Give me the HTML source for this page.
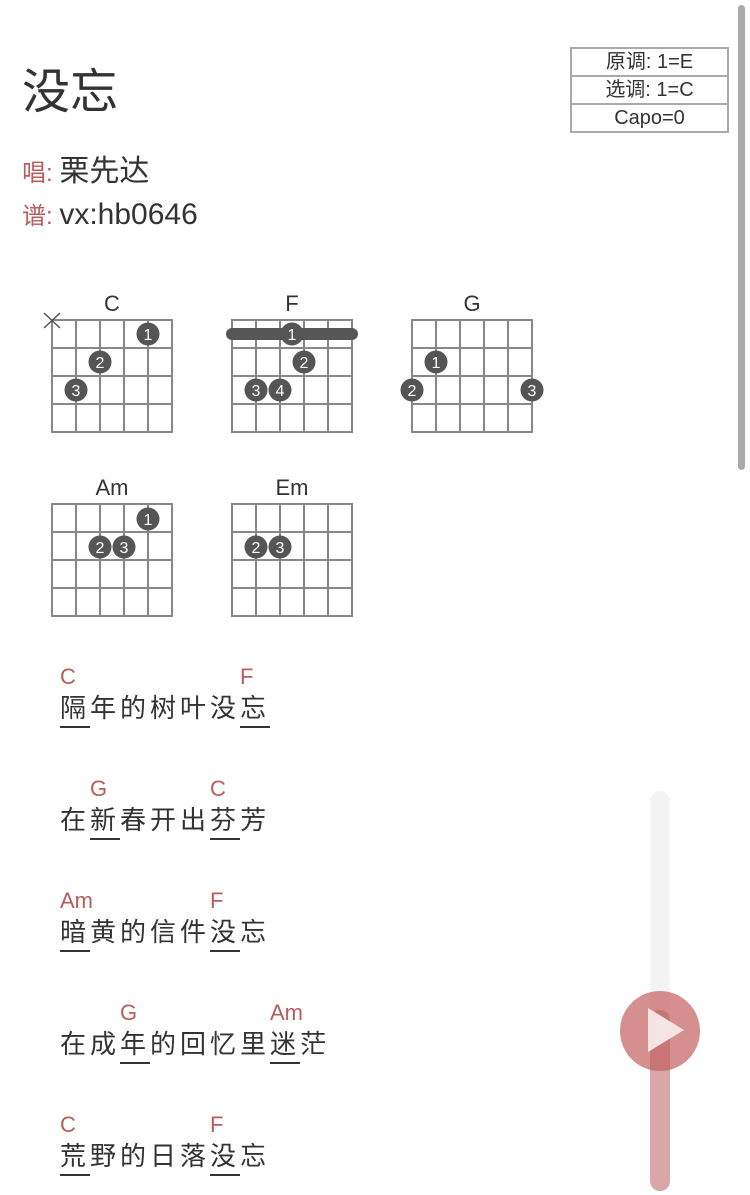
<!DOCTYPE html>
<html><head><meta charset="utf-8"><style>
body{margin:0;width:750px;height:1195px;background:#fff;position:relative;overflow:hidden;font-family:"Liberation Sans","Noto Sans CJK SC",sans-serif;color:#333}
.a{position:absolute;white-space:nowrap}
.title{left:22px;top:52px;font-size:48px;color:#333}
.lab{color:#b85c5c;font-size:24px}
.nm{font-size:30px;color:#333}
table{position:absolute;left:570px;top:47px;border-collapse:collapse}
td{border:2px solid #aaa;width:155px;height:26px;padding:0;text-align:center;font-size:20px;line-height:26px;color:#333}
.ly{font-size:26px;letter-spacing:4px;color:#333}
.ly u{text-decoration:none;border-bottom:2px solid #333;padding-bottom:3px}
.ch{color:#b85c5c;font-size:22px}
</style></head><body>
<div class="a title">没忘</div>
<div class="a" style="left:22px;top:146px"><span class="lab">唱: </span><span class="nm">栗先达</span></div>
<div class="a" style="left:22px;top:196px"><span class="lab">谱: </span><span class="nm">vx:hb0646</span></div>
<table><tr><td>原调: 1=E</td></tr><tr><td>选调: 1=C</td></tr><tr><td>Capo=0</td></tr></table>
<div class="a" style="left:738px;top:5px;width:7px;height:465px;background:#aaa;border-radius:4px"></div>

<svg class="a" style="left:0;top:280px" width="560" height="350" viewBox="0 280 560 350" font-family="Liberation Sans, sans-serif">
<defs>
<g id="grid" stroke="#888" stroke-width="2" fill="none">
<rect x="0" y="0" width="120" height="112"/>
<path d="M24 0V112M48 0V112M72 0V112M96 0V112M0 28H120M0 56H120M0 84H120"/>
</g>
</defs>
<g font-size="22" fill="#333" text-anchor="middle">
<text x="112" y="311">C</text><text x="292" y="311">F</text><text x="472" y="311">G</text>
<text x="112" y="495">Am</text><text x="292" y="495">Em</text></g>
<use href="#grid" x="52" y="320"/><use href="#grid" x="232" y="320"/><use href="#grid" x="412" y="320"/>
<use href="#grid" x="52" y="504"/><use href="#grid" x="232" y="504"/>
<path d="M44 313L60 328M60 313L44 328" stroke="#555" stroke-width="1.5"/>
<line x1="232" y1="334" x2="352" y2="334" stroke="#555" stroke-width="12" stroke-linecap="round"/>
<g fill="#555">
<circle cx="148" cy="334" r="11.5"/><circle cx="100" cy="362" r="11.5"/><circle cx="76" cy="390" r="11.5"/>
<circle cx="292" cy="334" r="11.5"/><circle cx="304" cy="362" r="11.5"/><circle cx="256" cy="390" r="11.5"/><circle cx="280" cy="390" r="11.5"/>
<circle cx="436" cy="362" r="11.5"/><circle cx="412" cy="390" r="11.5"/><circle cx="532" cy="390" r="11.5"/>
<circle cx="148" cy="519" r="11.5"/><circle cx="100" cy="547" r="11.5"/><circle cx="124" cy="547" r="11.5"/>
<circle cx="256" cy="547" r="11.5"/><circle cx="280" cy="547" r="11.5"/>
</g>
<g fill="#fff" font-size="16" text-anchor="middle">
<text x="148" y="340">1</text><text x="100" y="368">2</text><text x="76" y="396">3</text>
<text x="292" y="340">1</text><text x="304" y="368">2</text><text x="256" y="396">3</text><text x="280" y="396">4</text>
<text x="436" y="368">1</text><text x="412" y="396">2</text><text x="532" y="396">3</text>
<text x="148" y="525">1</text><text x="100" y="553">2</text><text x="124" y="553">3</text>
<text x="256" y="553">2</text><text x="280" y="553">3</text>
</g>
</svg>

<div class="a ch" style="left:60px;top:664px">C</div><div class="a ch" style="left:240px;top:664px">F</div>
<div class="a ly" style="left:60px;top:688px"><u>隔</u>年的树叶没<u>忘</u></div>
<div class="a ch" style="left:90px;top:776px">G</div><div class="a ch" style="left:210px;top:776px">C</div>
<div class="a ly" style="left:60px;top:800px">在<u>新</u>春开出<u>芬</u>芳</div>
<div class="a ch" style="left:60px;top:888px">Am</div><div class="a ch" style="left:210px;top:888px">F</div>
<div class="a ly" style="left:60px;top:912px"><u>暗</u>黄的信件<u>没</u>忘</div>
<div class="a ch" style="left:120px;top:1000px">G</div><div class="a ch" style="left:270px;top:1000px">Am</div>
<div class="a ly" style="left:60px;top:1024px">在成<u>年</u>的回忆里<u>迷</u>茫</div>
<div class="a ch" style="left:60px;top:1112px">C</div><div class="a ch" style="left:210px;top:1112px">F</div>
<div class="a ly" style="left:60px;top:1136px"><u>荒</u>野的日落<u>没</u>忘</div>

<div class="a" style="left:650px;top:791px;width:20px;height:400px;border-radius:10px;background:#f4f4f4"></div>
<div class="a" style="left:650px;top:1010px;width:20px;height:181px;border-radius:10px;background:#d9a7a7"></div>
<div class="a" style="left:620px;top:991px;width:80px;height:80px;border-radius:50%;background:rgba(195,95,95,.7)"></div>
<svg class="a" style="left:620px;top:991px" width="80" height="80"><path d="M28 17L64 39L28 61Z" fill="#f4e4e4"/></svg>
</body></html>
